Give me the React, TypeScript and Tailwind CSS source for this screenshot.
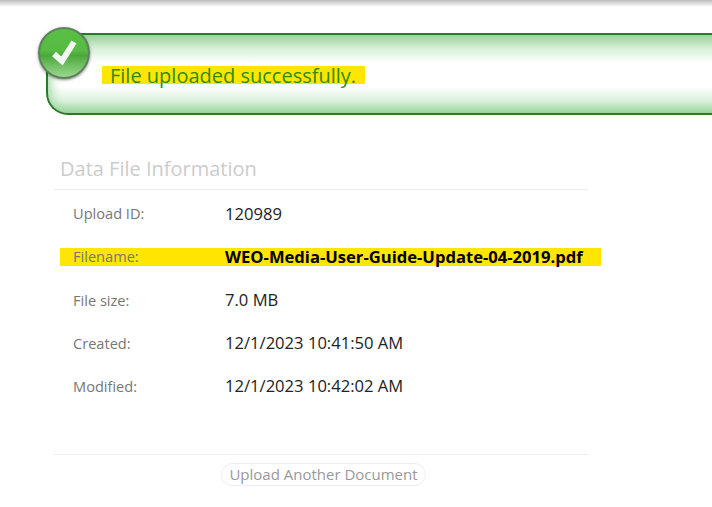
const rows = [
  { label: "Upload ID:", value: "120989" },
  { label: "Filename:", value: "WEO-Media-User-Guide-Update-04-2019.pdf", highlight: true },
  { label: "File size:", value: "7.0 MB" },
  { label: "Created:", value: "12/1/2023 10:41:50 AM" },
  { label: "Modified:", value: "12/1/2023 10:42:02 AM" },
];

function CheckBadge() {
  return (
    <div className="absolute left-[-10px] top-[-8px] h-[52px] w-[52px] rounded-full border-2 border-[#5f7f5f] bg-[linear-gradient(180deg,#58bf45_0%,#56bb42_45%,#4aa83a_55%,#9bd88f_100%)] shadow-[0_1px_3px_rgba(0,0,0,0.45)]">
      <svg viewBox="0 0 48 48" className="h-full w-full">
        <path d="M14 25 L22 32 L34 13" fill="none" stroke="#f4f8f2" strokeWidth="6" strokeLinejoin="miter" />
      </svg>
    </div>
  );
}

export default function App() {
  return (
    <div className="h-[507px] w-[712px] overflow-hidden bg-white font-['Open_Sans',sans-serif]">
      <div className="h-[7px] bg-[linear-gradient(180deg,#bdbdbd,#ffffff)]" />

      <div className="relative ml-[46px] mt-[26px] flex h-[82px] items-center rounded-bl-[22px] rounded-tl-[10px] border-y-2 border-l-2 border-[#2a7a2e] bg-[linear-gradient(180deg,#98d498_0%,#d9f0d9_18%,#ffffff_36%,#ffffff_66%,#dcf1dc_84%,#98d498_100%)] shadow-[inset_14px_0_12px_-12px_#98d498]">
        <CheckBadge />
        <span className="ml-[54px] mt-[1px] inline-block h-[18px] bg-[#ffe600] pl-2 pr-[9px] pt-px text-[20px] leading-[18px] text-[#2e8b0e]">
          File uploaded successfully.
        </span>
      </div>

      <div className="ml-[53px] mt-[41px] w-[535px]">
        <h2 className="border-b border-[#eeeeee] pb-[7px] pl-[7px] text-[20px] leading-[26px] text-[#cccccc]">
          Data File Information
        </h2>

        <div className="mb-[45px] mt-[2.6px] flex h-[216px] flex-col">
          {rows.map((row) => (
            <div key={row.label} className="flex h-[43.2px] items-center">
              <div
                className={
                  row.highlight
                    ? "ml-[7px] flex h-[18px] w-[541px] shrink-0 items-center bg-[#ffe600] pl-[13px]"
                    : "ml-[20px] flex items-center"
                }
              >
                <span className="w-[152px] shrink-0 text-[14.6px] text-[#777777]">{row.label}</span>
                <span className={row.highlight ? "text-[16.6px] font-bold text-black" : "text-[16.6px] text-[#222222]"}>
                  {row.value}
                </span>
              </div>
            </div>
          ))}
        </div>

        <div className="flex justify-center border-t border-[#eeeeee] pl-[6px] pt-2">
          <button className="h-[23px] rounded-full border border-[#eeeeee] px-[7px] text-[15px] leading-[19px] text-[#999999]">
            Upload Another Document
          </button>
        </div>
      </div>
    </div>
  );
}
